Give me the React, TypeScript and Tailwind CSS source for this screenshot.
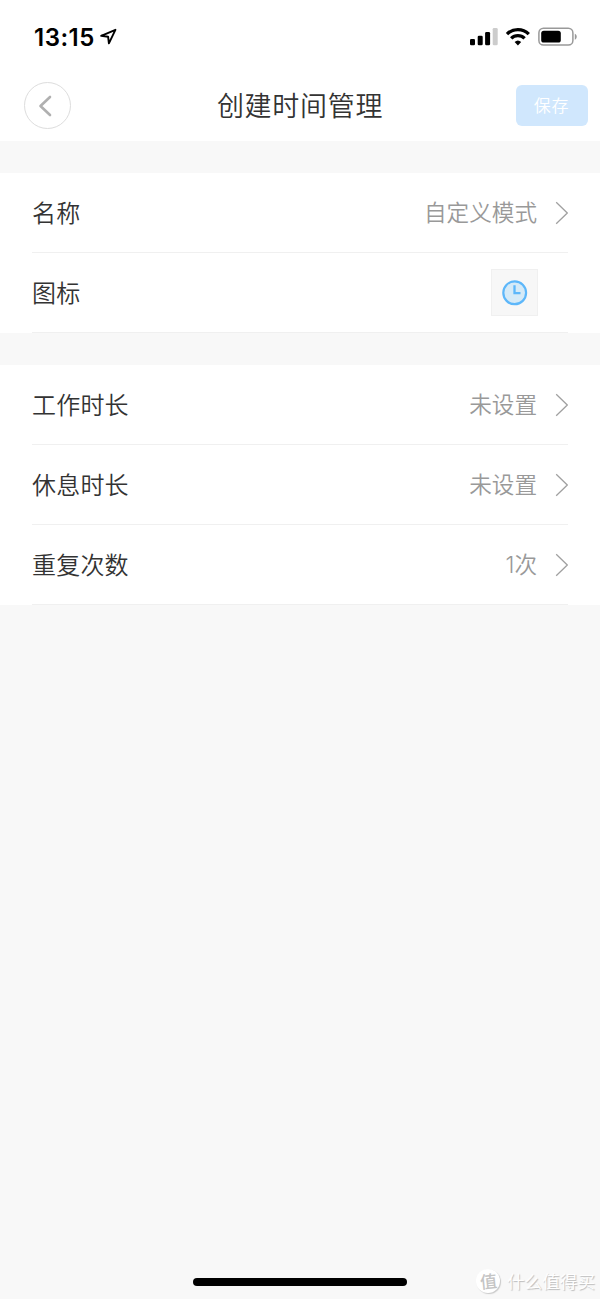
import type { ReactNode } from 'react';

function StatusBar() {
  return (
    <div className="flex h-[72px] items-start justify-between pl-[34px] pr-[22px] pt-[22px]">
      <div className="flex items-start">
        <span className="w-[61px] whitespace-nowrap pt-px font-['Inter','Liberation_Sans',sans-serif] text-[24px] font-semibold leading-[30px] tracking-[0.5px] text-black">
          13:15
        </span>
        <svg className="ml-[5px] mt-1.5" width="17" height="17" viewBox="0 0 17 17" fill="none" stroke="#000" strokeWidth="1.9" strokeLinejoin="round">
          <path d="M15.4 1.8 1.2 7.8l6.9.9.8 6.6Z" />
        </svg>
      </div>
      <svg className="mt-[5px]" width="108" height="20" viewBox="0 0 108 20">
        <rect x="0" y="12" width="5" height="6.3" rx="1.3" />
        <rect x="7.7" y="8.8" width="5" height="9.5" rx="1.3" />
        <rect x="15.1" y="5" width="5" height="13.3" rx="1.3" />
        <rect x="22.7" y="1" width="5" height="17.3" rx="1.3" fill="#cccccc" />
        <g fill="none" stroke="#000" strokeWidth="3.3">
          <path d="M37 7.1a15.6 15.6 0 0 1 21.8 0" />
          <path d="M41.2 11.4a9.5 9.5 0 0 1 13.4 0" />
        </g>
        <path d="M44.6 15a4.9 4.9 0 0 1 6.6 0l-3.3 3.4Z" />
        <rect x="68.9" y="1.3" width="34" height="16.7" rx="4.6" fill="none" stroke="#999999" strokeWidth="1.5" />
        <rect x="71.2" y="3.8" width="19.6" height="11.7" rx="2.6" />
        <path d="M104.8 6.8c2.6 1 2.6 4.9 0 5.9Z" fill="#999999" />
      </svg>
    </div>
  );
}

function Header() {
  return (
    <header className="grid h-[69px] grid-cols-[1fr_auto_1fr] items-start px-3">
      <button aria-label="返回" className="ml-3 mt-[10px] flex h-[47px] w-[47px] items-center justify-center rounded-full border border-[#dddddd]">
        <svg className="-ml-[5px]" width="14" height="22" viewBox="0 0 14 22" fill="none" stroke="#b0b0b0" strokeWidth="2.6" strokeLinecap="round" strokeLinejoin="round">
          <path d="M12 2 2.5 11 12 20" />
        </svg>
      </button>
      <h1 className="mt-[13px] text-[27px] leading-10 tracking-[0.7px] text-[#333333]">创建时间管理</h1>
      <button className="mt-[13px] h-[41px] w-[72px] justify-self-end rounded-[6px] bg-[#d0e7fd] pb-px pr-px text-[17px] tracking-[0.8px] text-white">
        保存
      </button>
    </header>
  );
}

function Row({ label, children, arrow = true }: { label: string; children: ReactNode; arrow?: boolean }) {
  return (
    <div className="mx-8 flex h-20 items-center border-b border-[#f0f0f0]">
      <span className="pb-0.5 text-[24px] leading-9 tracking-[0.2px] text-[#333333]">{label}</span>
      <div className="ml-auto mr-[30px] flex items-center text-[22.6px] leading-9 text-[#999999]">{children}</div>
      {arrow && (
        <svg className="-ml-3 shrink-0" width="13" height="24" viewBox="0 0 13 24" fill="none" stroke="#a0a0a0" strokeWidth="1.3">
          <path d="M1.2 1.2 12.3 12 1.2 22.8" />
        </svg>
      )}
    </div>
  );
}

function ClockIcon() {
  return (
    <svg width="26" height="26" viewBox="0 0 26 26" fill="none" stroke="#5db7fa">
      <circle cx="12.7" cy="12.8" r="11.4" fill="#d5eaf7" strokeWidth="2.2" />
      <path d="M12.5 5.2v8h6" strokeWidth="2.3" />
    </svg>
  );
}

function Watermark() {
  return (
    <div className="absolute bottom-[3px] right-[5px] flex items-center text-white [text-shadow:1px_1px_1px_#bbbbbb]">
      <span className="mr-[7px] flex h-6 w-6 items-center justify-center rounded-full bg-white text-[17px] font-medium leading-none text-[#c4c4c4] shadow-[1px_1px_1px_#c8c8c8] [text-shadow:none]">
        <span className="-rotate-6 pb-0.5">值</span>
      </span>
      <span className="text-[17.6px] leading-[30px]">什么值得买</span>
    </div>
  );
}

export default function App() {
  return (
    <div className="relative flex h-[1299px] w-[600px] flex-col overflow-hidden bg-[#f8f8f8] font-['Noto_Sans_CJK_SC',sans-serif] font-[350]">
      <div className="bg-white">
        <StatusBar />
        <Header />
      </div>

      <section className="mt-8 bg-white">
        <Row label="名称"><span className="pb-px">自定义模式</span></Row>
        <Row label="图标" arrow={false}>
          <span className="flex h-[47px] w-[47px] items-center justify-center border border-[#f0f0f0] bg-[#f7f7f7]">
            <ClockIcon />
          </span>
        </Row>
      </section>

      <section className="mt-8 bg-white">
        <Row label="工作时长"><span className="pb-px">未设置</span></Row>
        <Row label="休息时长"><span className="pb-px">未设置</span></Row>
        <Row label="重复次数">
          <span><span className="font-['Inter',sans-serif]">1</span>次</span>
        </Row>
      </section>

      {/* Home indicator */}
      <div className="mb-[13px] ml-[193px] mt-auto h-2 w-[214px] rounded-full bg-black" />
      <Watermark />
    </div>
  );
}
